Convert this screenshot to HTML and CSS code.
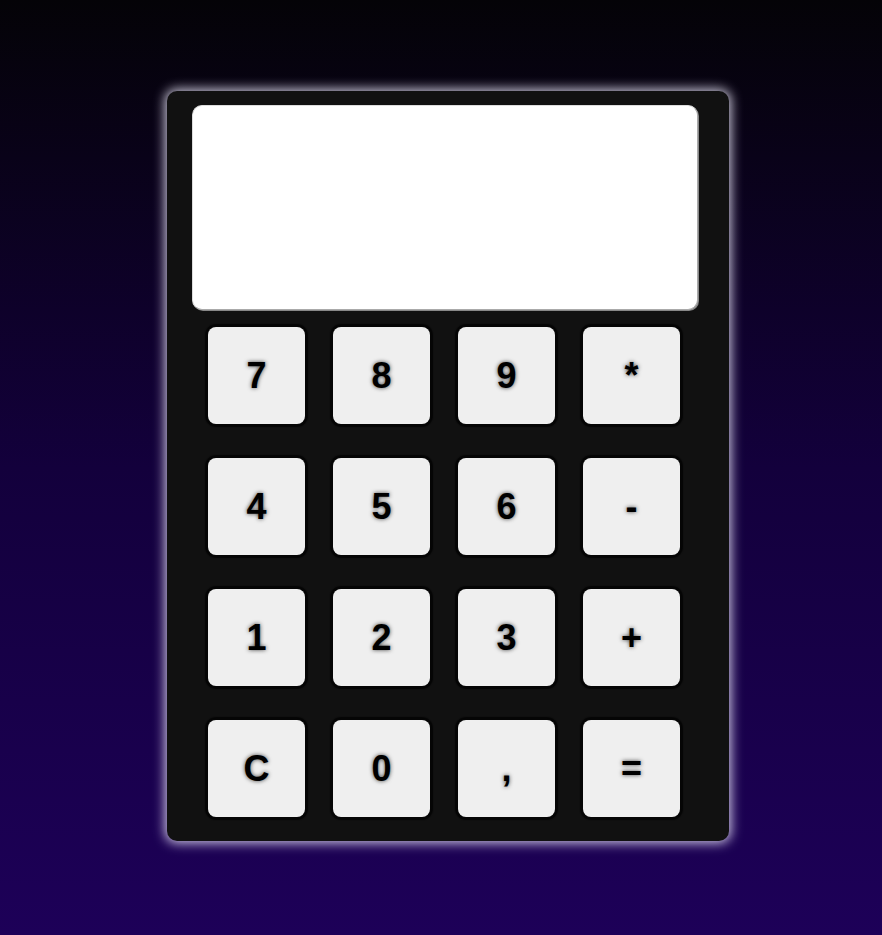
FILE: index.html
```html
<!DOCTYPE html>
<html>
<head>
<meta charset="utf-8">
<link rel="stylesheet" href="styles.css">
</head>
<body>
<div class="page">
  <div class="calc">
    <div class="display"></div>
    <div class="keys">
      <button class="key">7</button>
      <button class="key">8</button>
      <button class="key">9</button>
      <button class="key">*</button>
      <button class="key">4</button>
      <button class="key">5</button>
      <button class="key">6</button>
      <button class="key">-</button>
      <button class="key">1</button>
      <button class="key">2</button>
      <button class="key">3</button>
      <button class="key">+</button>
      <button class="key">C</button>
      <button class="key">0</button>
      <button class="key">,</button>
      <button class="key">=</button>
    </div>
  </div>
</div>
</body>
</html>
```

FILE: styles.css
```css
html, body {
  margin: 0;
  padding: 0;
  height: 100%;
}
body {
  background: linear-gradient(to bottom, #040307 0%, #13003c 50%, #1d0058 100%);
  font-family: "Liberation Sans", Arial, sans-serif;
}
.page {
  display: flex;
  justify-content: flex-start;
  padding: 91px 0 0 167px;
}
.calc {
  width: 562px;
  height: 750px;
  box-sizing: border-box;
  background: #111111;
  border-radius: 10px;
  box-shadow: 0 0 12px 2px rgba(240, 236, 255, 0.85);
  padding: 14px 31px 24px 25px;
  display: flex;
  flex-direction: column;
}
.display {
  width: 506px;
  height: 205px;
  box-sizing: border-box;
  background: #ffffff;
  border-radius: 10px;
  border: 1px solid #aaa;
  border-top-color: #ddd;
  border-left-color: #ddd;
  box-shadow: 1px 1px 0 0 #888;
}
.keys {
  margin-top: 17px;
  padding-left: 16px;
  display: grid;
  grid-template-columns: repeat(4, 97px);
  grid-auto-rows: 97px;
  column-gap: 28px;
  row-gap: 34px;
}
.key {
  margin: 0;
  padding: 0;
  border: none;
  background: #efefef;
  border-radius: 8px;
  box-shadow: 0 0 1px 3px #050505;
  font-family: "Liberation Sans", Arial, sans-serif;
  font-weight: bold;
  font-size: 36px;
  color: #000;
  text-shadow: 0 0 4px #444;
  display: flex;
  align-items: center;
  justify-content: center;
}
```
